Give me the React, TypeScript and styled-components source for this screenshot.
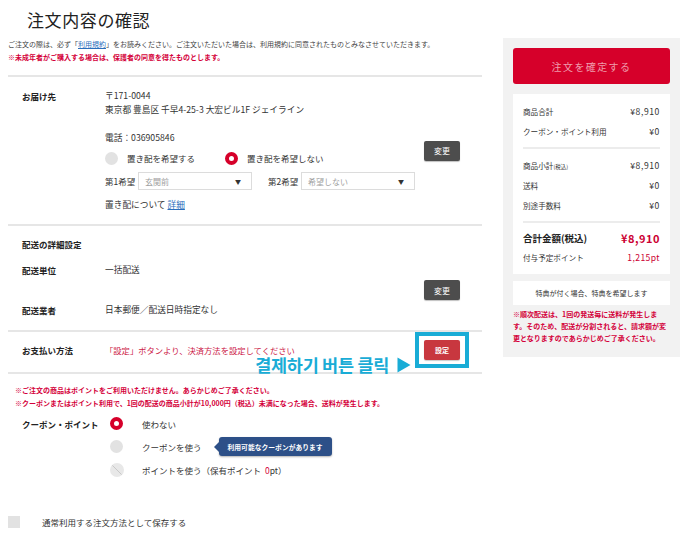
import React from 'react';
import styled, { createGlobalStyle } from 'styled-components';

const RED = '#d6002a';
const TEXT_RED = '#d4003a';
const CYAN = '#19acd6';

const GlobalStyle = createGlobalStyle`
    html, body {
        margin: 0;
        padding: 0;
        background: #fff;
    }
    body {
        font-family: "Noto Sans CJK JP", "Noto Sans", sans-serif;
        color: #333;
    }
`;

const Radio: React.FC<{ checked?: boolean; disabled?: boolean }> = ({
    checked,
    disabled,
}) => {
    if (disabled) {
        return (
            <DisabledRadio viewBox="0 0 14 14">
                <circle cx="7" cy="7" r="7" fill="#e8e8e8" />
                <line x1="2.4" y1="2.4" x2="11.6" y2="11.6" stroke="#c4c4c4" strokeWidth="0.9" />
            </DisabledRadio>
        );
    }
    return <RadioDot $checked={checked} />;
};

const App: React.FC = () => {
    return (
        <>
            <GlobalStyle />
            <Page>
                <Main>
                    <Title>注文内容の確認</Title>
                    <Intro>
                        <SmallNote>
                            ご注文の際は、必ず「<TextLink>利用規約</TextLink>」をお読みください。ご注文いただいた場合は、利用規約に同意されたものとみなさせていただきます。
                        </SmallNote>
                        <SmallNote $red>
                            ※未成年者がご購入する場合は、保護者の同意を得たものとします。
                        </SmallNote>
                    </Intro>

                    <Section $pt={12} $pb={12}>
                        <Row>
                            <Label $top>お届け先</Label>
                            <div>
                                <Line>〒171-0044</Line>
                                <Line>東京都 豊島区 千早4-25-3 大宏ビル1F ジェイライン</Line>
                                <Line $mt={14}>電話：036905846</Line>
                                <Options>
                                    <Option>
                                        <Radio />
                                        <OptionText>置き配を希望する</OptionText>
                                    </Option>
                                    <Option>
                                        <Radio checked />
                                        <OptionText>置き配を希望しない</OptionText>
                                    </Option>
                                </Options>
                                <SelectRow>
                                    <SelectLabel>第1希望</SelectLabel>
                                    <SelectBox>
                                        <span>玄関前</span>
                                        <Caret>▼</Caret>
                                    </SelectBox>
                                    <SelectLabel>第2希望</SelectLabel>
                                    <SelectBox>
                                        <span>希望しない</span>
                                        <Caret>▼</Caret>
                                    </SelectBox>
                                </SelectRow>
                                <Line $mt={8}>
                                    置き配について <TextLink>詳細</TextLink>
                                </Line>
                            </div>
                            <DarkButton>変更</DarkButton>
                        </Row>
                    </Section>

                    <Section $pt={11} $pb={13}>
                        <Label>配送の詳細設定</Label>
                        <DeliveryGrid>
                            <Label>配送単位</Label>
                            <Line>一括配送</Line>
                            <DarkButton $span>変更</DarkButton>
                            <Label>配送業者</Label>
                            <Line>日本郵便／配送日時指定なし</Line>
                        </DeliveryGrid>
                    </Section>

                    <Section $pt={8} $pb={12}>
                        <Row>
                            <Label>お支払い方法</Label>
                            <PayText>「設定」ボタンより、決済方法を設定してください</PayText>
                            <ButtonWrap>
                                <Highlight />
                                <RedButton>設定</RedButton>
                                <Callout>
                                    결제하기 버튼 클릭
                                    <svg width="14" height="16" viewBox="0 0 14 16">
                                        <path d="M0.5 0.5 L13.5 8 L0.5 15.5 Z" fill={CYAN} />
                                    </svg>
                                </Callout>
                            </ButtonWrap>
                        </Row>
                    </Section>

                    <PointNotes>
                        <SmallNote $red>※ご注文の商品はポイントをご利用いただけません。あらかじめご了承ください。</SmallNote>
                        <SmallNote $red $lh={12}>
                            ※クーポンまたはポイント利用で、1回の配送の商品小計が10,000円（税込）未満になった場合、送料が発生します。
                        </SmallNote>
                    </PointNotes>

                    <CouponGrid>
                        <Label>クーポン・ポイント</Label>
                        <Radio checked />
                        <OptionText>使わない</OptionText>

                        <span />
                        <Radio />
                        <OptionText>
                            クーポンを使う
                            <Tooltip>利用可能なクーポンがあります</Tooltip>
                        </OptionText>

                        <span />
                        <Radio disabled />
                        <OptionText>
                            ポイントを使う（保有ポイント<RedNum>0</RedNum>pt）
                        </OptionText>
                    </CouponGrid>

                    <SaveRow>
                        <CheckBox />
                        <OptionText>通常利用する注文方法として保存する</OptionText>
                    </SaveRow>
                </Main>

                <Sidebar>
                    <ConfirmButton>注文を確定する</ConfirmButton>
                    <SummaryCard>
                        <SumRow>
                            <span>商品合計</span>
                            <Amount>¥8,910</Amount>
                        </SumRow>
                        <SumRow>
                            <span>クーポン・ポイント利用</span>
                            <Amount>¥0</Amount>
                        </SumRow>
                        <Divider />
                        <SumRow>
                            <span>
                                商品小計<Tiny>(税込)</Tiny>
                            </span>
                            <Amount>¥8,910</Amount>
                        </SumRow>
                        <SumRow>
                            <span>送料</span>
                            <Amount>¥0</Amount>
                        </SumRow>
                        <SumRow>
                            <span>別途手数料</span>
                            <Amount>¥0</Amount>
                        </SumRow>
                        <Divider />
                        <TotalRow>
                            <span>合計金額(税込)</span>
                            <TotalAmount>¥8,910</TotalAmount>
                        </TotalRow>
                        <SumRow>
                            <span>付与予定ポイント</span>
                            <PointAmount>1,215pt</PointAmount>
                        </SumRow>
                    </SummaryCard>
                    <PerkBox>特典が付く場合、特典を希望します</PerkBox>
                    <SideNote>
                        ※順次配送は、1回の発送毎に送料が発生します。そのため、配送が分割されると、請求額が変更となりますのであらかじめご了承ください。
                    </SideNote>
                </Sidebar>
            </Page>
        </>
    );
};

export default App;

const Page = styled.div`
    display: flex;
    align-items: flex-start;
    gap: 21px;
    padding-left: 8px;
    width: 688px;
    height: 540px;
    box-sizing: border-box;
    overflow: hidden;
`;

const Main = styled.main`
    width: 474px;
    flex-shrink: 0;
`;

const Title = styled.h1`
    margin: 0 0 0 19px;
    padding-top: 9px;
    font-size: 17px;
    line-height: 22px;
    font-weight: 400;
    letter-spacing: 0.6px;
    color: #222;
`;

const Intro = styled.div`
    margin-top: 7px;
    padding-bottom: 11px;
    border-bottom: 2px solid #e6e6e6;
`;

const SmallNote = styled.p<{ $red?: boolean; $lh?: number }>`
    margin: 0;
    font-size: 7px;
    line-height: ${({ $lh }) => $lh ?? 13}px;
    font-weight: ${({ $red }) => ($red ? 700 : 400)};
    color: ${({ $red }) => ($red ? TEXT_RED : '#444')};
    white-space: nowrap;
`;

const TextLink = styled.a`
    color: #2a6ebb;
    text-decoration: underline;
    cursor: pointer;
`;

const Section = styled.section<{ $pt: number; $pb: number }>`
    padding: ${({ $pt }) => $pt}px 22px ${({ $pb }) => $pb}px 14px;
    border-bottom: 2px solid #e6e6e6;
`;

const Row = styled.div`
    display: grid;
    grid-template-columns: 83px minmax(0, 1fr) 36px;
    align-items: center;
`;

const Label = styled.div<{ $top?: boolean }>`
    align-self: ${({ $top }) => ($top ? 'start' : 'center')};
    font-size: 8.5px;
    line-height: 14px;
    font-weight: 700;
    color: #222;
    white-space: nowrap;
`;

const Line = styled.div<{ $mt?: number }>`
    margin-top: ${({ $mt }) => $mt ?? 0}px;
    font-size: 8.7px;
    line-height: 14px;
    color: #333;
    white-space: nowrap;
`;

const Options = styled.div`
    display: flex;
    gap: 30px;
    margin-top: 6px;
    height: 14px;
    align-items: center;
`;

const Option = styled.label`
    display: flex;
    align-items: center;
    gap: 9px;
`;

const OptionText = styled.span`
    display: flex;
    align-items: center;
    font-size: 8.5px;
    line-height: 14px;
    color: #333;
    white-space: nowrap;
`;

const RadioDot = styled.span<{ $checked?: boolean }>`
    display: block;
    width: 13px;
    height: 13px;
    border-radius: 50%;
    box-sizing: border-box;
    flex-shrink: 0;
    background: ${({ $checked }) => ($checked ? '#fff' : '#e2e2e2')};
    border: ${({ $checked }) => ($checked ? `4.5px solid ${RED}` : 'none')};
`;

const DisabledRadio = styled.svg`
    display: block;
    width: 14px;
    height: 14px;
`;

const SelectRow = styled.div`
    display: flex;
    align-items: center;
    margin-top: 7px;
`;

const SelectLabel = styled.span`
    width: 33px;
    font-size: 8.5px;
    color: #333;
    white-space: nowrap;
`;

const SelectBox = styled.div`
    width: 114px;
    height: 18px;
    box-sizing: border-box;
    border: 1px solid #dcdcdc;
    margin-right: 16px;
    padding: 0 10px 0 6px;
    display: flex;
    align-items: center;
    justify-content: space-between;
    font-size: 8px;
    color: #a0a0a0;
    &:last-child {
        margin-right: 0;
    }
`;

const Caret = styled.span`
    font-size: 6px;
    color: #333;
`;

const DarkButton = styled.button<{ $span?: boolean }>`
    grid-row: ${({ $span }) => ($span ? '1 / 3' : 'auto')};
    grid-column: 3;
    align-self: center;
    width: 36px;
    height: 20px;
    padding: 0;
    border: none;
    border-radius: 2px;
    background: #4d4d4d;
    box-shadow: 0 1px 1px rgba(0, 0, 0, 0.25);
    color: #fff;
    font-family: inherit;
    font-size: 8px;
`;

const DeliveryGrid = styled.div`
    display: grid;
    grid-template-columns: 83px minmax(0, 1fr) 36px;
    grid-template-rows: 14px 14px;
    row-gap: 26px;
    align-items: center;
    margin-top: 12px;
`;

const PayText = styled.div`
    font-size: 8.3px;
    line-height: 14px;
    color: #cc1846;
    white-space: nowrap;
`;

const ButtonWrap = styled.div`
    position: relative;
    width: 36px;
    height: 20px;
`;

const Highlight = styled.div`
    position: absolute;
    inset: -8px -9px;
    border: 4px solid ${CYAN};
`;

const RedButton = styled.button`
    position: relative;
    display: block;
    width: 36px;
    height: 20px;
    padding: 0;
    border: none;
    border-radius: 2px;
    background: #c8373f;
    box-shadow: 0 1px 1px rgba(0, 0, 0, 0.2);
    color: #fff;
    font-family: inherit;
    font-size: 7px;
    font-weight: 700;
`;

const Callout = styled.div`
    position: absolute;
    right: 49px;
    top: 15px;
    display: flex;
    align-items: center;
    gap: 8px;
    font-family: "Noto Sans CJK KR", "Noto Sans", sans-serif;
    font-size: 17.5px;
    line-height: 20px;
    font-weight: 700;
    letter-spacing: -0.3px;
    color: ${CYAN};
    white-space: nowrap;
`;

const PointNotes = styled.div`
    margin-top: 10px;
    padding-left: 7px;
`;

const CouponGrid = styled.div`
    display: grid;
    grid-template-columns: 88px 32px auto;
    grid-auto-rows: 23px;
    align-items: center;
    margin-top: 3px;
    padding-left: 14px;
`;

const Tooltip = styled.span`
    position: relative;
    margin-left: 17px;
    height: 19px;
    padding: 0 9px;
    display: inline-flex;
    align-items: center;
    border-radius: 3px;
    background: #2d5088;
    box-shadow: 0 1px 2px rgba(0, 0, 0, 0.3);
    color: #fff;
    font-size: 6.8px;
    font-weight: 700;
    &::before {
        content: '';
        position: absolute;
        left: -5px;
        top: 50%;
        transform: translateY(-50%);
        border-top: 5px solid transparent;
        border-bottom: 5px solid transparent;
        border-right: 5px solid #2d5088;
    }
`;

const RedNum = styled.span`
    margin-left: 4px;
    color: ${TEXT_RED};
`;

const SaveRow = styled.div`
    display: flex;
    align-items: center;
    gap: 22px;
    margin-top: 34px;
`;

const CheckBox = styled.span`
    width: 12px;
    height: 12px;
    background: #e2e2e2;
`;

const Sidebar = styled.aside`
    width: 177px;
    flex-shrink: 0;
    margin-top: 38px;
    padding: 10px 10px 13px;
    box-sizing: border-box;
    background: #f2f2f2;
`;

const ConfirmButton = styled.button`
    display: block;
    width: 100%;
    height: 36px;
    border: none;
    border-radius: 3px;
    background: ${RED};
    color: rgba(255, 255, 255, 0.62);
    font-family: inherit;
    font-size: 10px;
    letter-spacing: 1.4px;
`;

const SummaryCard = styled.div`
    margin-top: 10px;
    padding: 7px 10px;
    background: #fff;
`;

const SumRow = styled.div`
    display: flex;
    justify-content: space-between;
    align-items: center;
    height: 20px;
    font-size: 7.6px;
    color: #333;
    white-space: nowrap;
`;

const Amount = styled.span`
    font-size: 8.6px;
    letter-spacing: 0.6px;
`;

const Tiny = styled.span`
    font-size: 5.5px;
`;

const Divider = styled.div`
    height: 2px;
    margin: 6px 0;
    background: #ececec;
`;

const TotalRow = styled.div`
    display: flex;
    justify-content: space-between;
    align-items: center;
    height: 18px;
    font-size: 9.5px;
    font-weight: 700;
    color: #222;
`;

const TotalAmount = styled.span`
    font-size: 11px;
    letter-spacing: 0.5px;
    color: #cc0033;
`;

const PointAmount = styled.span`
    font-size: 8.6px;
    letter-spacing: 0.4px;
    color: #cc0033;
`;

const PerkBox = styled.div`
    margin-top: 7px;
    height: 24px;
    display: flex;
    align-items: center;
    justify-content: center;
    background: #fff;
    font-size: 7px;
    color: #333;
`;

const SideNote = styled.p`
    margin: 3px 0 0;
    font-size: 7px;
    line-height: 12px;
    font-weight: 700;
    color: ${TEXT_RED};
`;
